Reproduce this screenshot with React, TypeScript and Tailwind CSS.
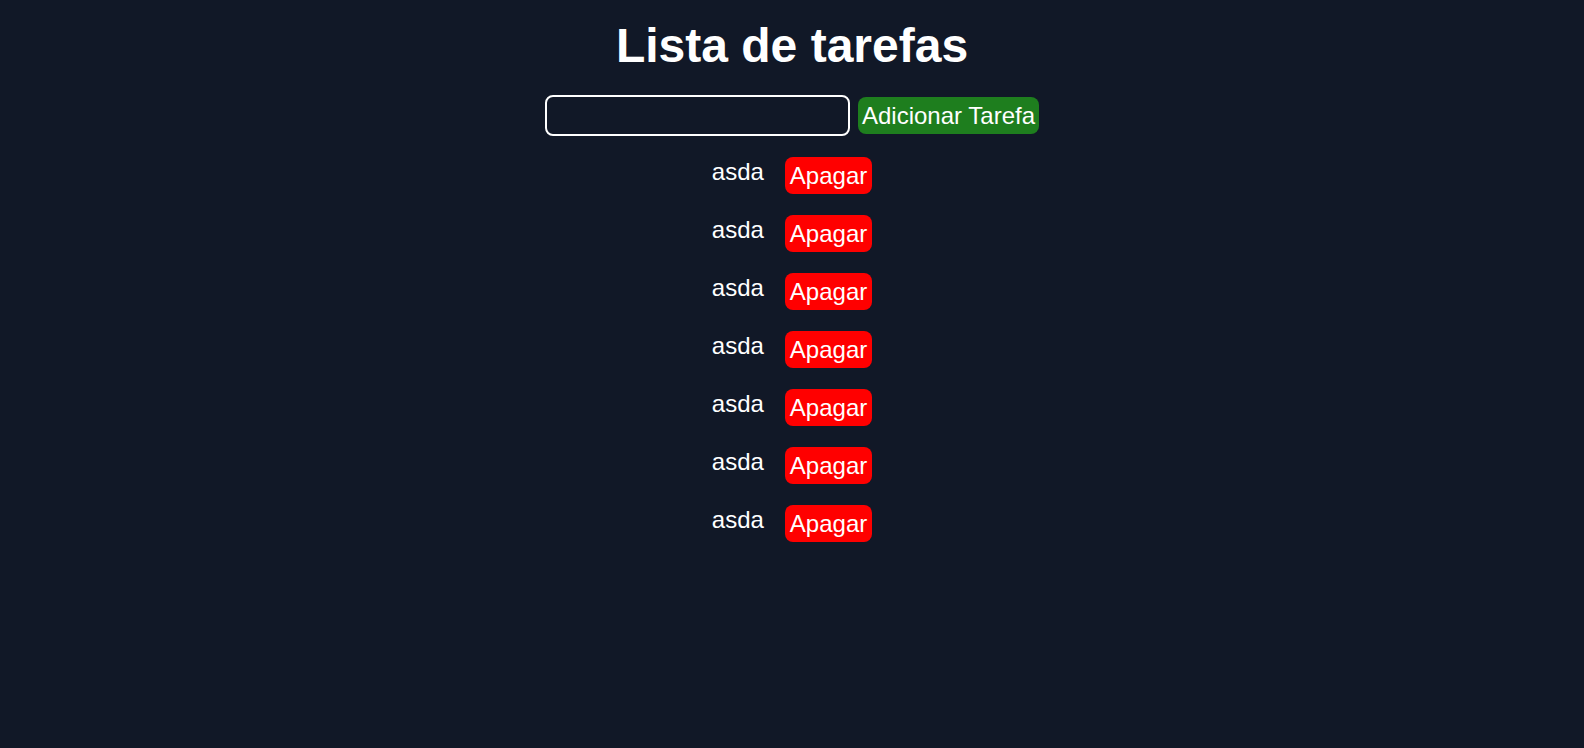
import React from "react";

export default function App() {
  const items = Array.from({ length: 7 }, () => "asda");
  return (
    <div
      className="min-h-screen w-full bg-[#111827] flex flex-col items-center text-white"
      style={{ fontFamily: '"Liberation Sans", Arial, sans-serif' }}
    >
      <h1 className="mt-[22px] text-[48px] leading-[48px] font-bold">Lista de tarefas</h1>
      <div className="mt-[25px] flex items-center gap-2">
        <input
          type="text"
          className="w-[305px] h-[41px] border-2 border-white rounded-lg bg-transparent outline-none px-2 text-white"
        />
        <button className="bg-[#1e7e1e] text-white text-[24px] leading-[29px] py-1 px-1 rounded-lg">
          Adicionar Tarefa
        </button>
      </div>
      <ul className="mt-[21px] flex flex-col gap-[21px]">
        {items.map((t, i) => (
          <li key={i} className="flex items-start gap-[21px]">
            <span className="text-[24px] leading-[28px] mt-px">{t}</span>
            <button className="bg-[#ff0000] text-white text-[24px] leading-[29px] py-1 px-[5px] rounded-lg">
              Apagar
            </button>
          </li>
        ))}
      </ul>
    </div>
  );
}
